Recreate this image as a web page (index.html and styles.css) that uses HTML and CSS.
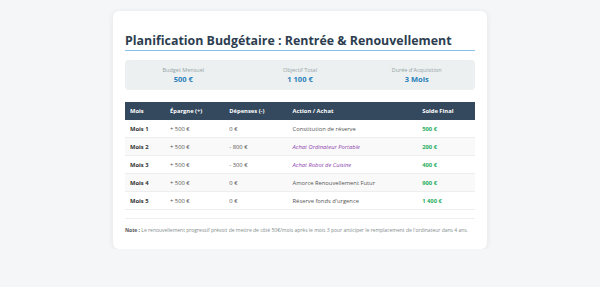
FILE: index.html
```html
<!DOCTYPE html>
<html lang="fr">
<head>
<meta charset="utf-8">
<link rel="stylesheet" href="styles.css">
</head>
<body>
<div class="card">
  <h1 class="title">Planification Budgétaire : Rentrée &amp; Renouvellement</h1>
  <div class="summary">
    <div class="stat"><div class="label">Budget Mensuel</div><div class="value">500 €</div></div>
    <div class="stat"><div class="label">Objectif Total</div><div class="value">1 100 €</div></div>
    <div class="stat"><div class="label">Durée d'Acquisition</div><div class="value">3 Mois</div></div>
  </div>
  <table class="plan">
    <thead>
      <tr><th>Mois</th><th>Épargne (+)</th><th>Dépenses (-)</th><th>Action / Achat</th><th>Solde Final</th></tr>
    </thead>
    <tbody>
      <tr><td class="month">Mois 1</td><td>+ 500 €</td><td>0 €</td><td>Constitution de réserve</td><td class="balance">500 €</td></tr>
      <tr><td class="month">Mois 2</td><td>+ 500 €</td><td>- 800 €</td><td class="purchase">Achat Ordinateur Portable</td><td class="balance">200 €</td></tr>
      <tr><td class="month">Mois 3</td><td>+ 500 €</td><td>- 300 €</td><td class="purchase">Achat Robot de Cuisine</td><td class="balance">400 €</td></tr>
      <tr><td class="month">Mois 4</td><td>+ 500 €</td><td>0 €</td><td>Amorce Renouvellement Futur</td><td class="balance">900 €</td></tr>
      <tr><td class="month">Mois 5</td><td>+ 500 €</td><td>0 €</td><td>Réserve fonds d'urgence</td><td class="balance">1 400 €</td></tr>
    </tbody>
  </table>
  <p class="note"><strong>Note :</strong> Le renouvellement progressif prévoit de mettre de côté 50€/mois après le mois 3 pour anticiper le remplacement de l'ordinateur dans 4 ans.</p>
</div>
</body>
</html>
```

FILE: styles.css
```css
html, body {
  margin: 0;
  padding: 0;
}
body {
  background: #f4f6f7;
  font-family: "Open Sans", "Noto Sans", sans-serif;
  color: #333;
}
.card {
  width: 350px;
  margin: 11px auto 0;
  padding: 22px 12px 16px;
  background: #fff;
  border-radius: 6px;
  box-shadow: 0 1px 6px rgba(0,0,0,0.08);
}
.title {
  margin: 0 0 8px;
  padding-bottom: 1px;
  font-size: 12.4px;
  line-height: 16px;
  font-weight: 700;
  color: #2c3e50;
  border-bottom: 1px solid #85c1e9;
}
.summary {
  display: flex;
  background: #ecf0f1;
  border-radius: 4px;
  padding: 6px 0;
  margin-top: 9px;
  margin-bottom: 12px;
}
.stat {
  flex: 1;
  text-align: center;
}
.label {
  font-size: 5.5px;
  line-height: 8px;
  color: #95a5a6;
}
.value {
  font-size: 7.5px;
  line-height: 10px;
  font-weight: 700;
  color: #2980b9;
}
.plan {
  width: 100%;
  border-collapse: collapse;
  font-size: 5.8px;
}
.plan th {
  background: #34495e;
  color: #fff;
  font-weight: 700;
  text-align: left;
  height: 18px;
  padding: 0 5px;
}
.plan td {
  height: 17px;
  padding: 0 5px;
  border-bottom: 1px solid #eee;
  color: #555;
}
.plan tbody tr:nth-child(even) td {
  background: #f9f9f9;
}
.plan td.month {
  font-weight: 700;
  color: #333;
}
.plan td.purchase {
  font-style: italic;
  color: #8e44ad;
}
.plan td.balance {
  font-weight: 700;
  color: #27ae60;
}
.note {
  margin: 8px 0 0;
  padding-top: 8px;
  border-top: 1px solid #eee;
  font-size: 5px;
  color: #7f8c8d;
}
.note strong {
  color: #555;
}
```
